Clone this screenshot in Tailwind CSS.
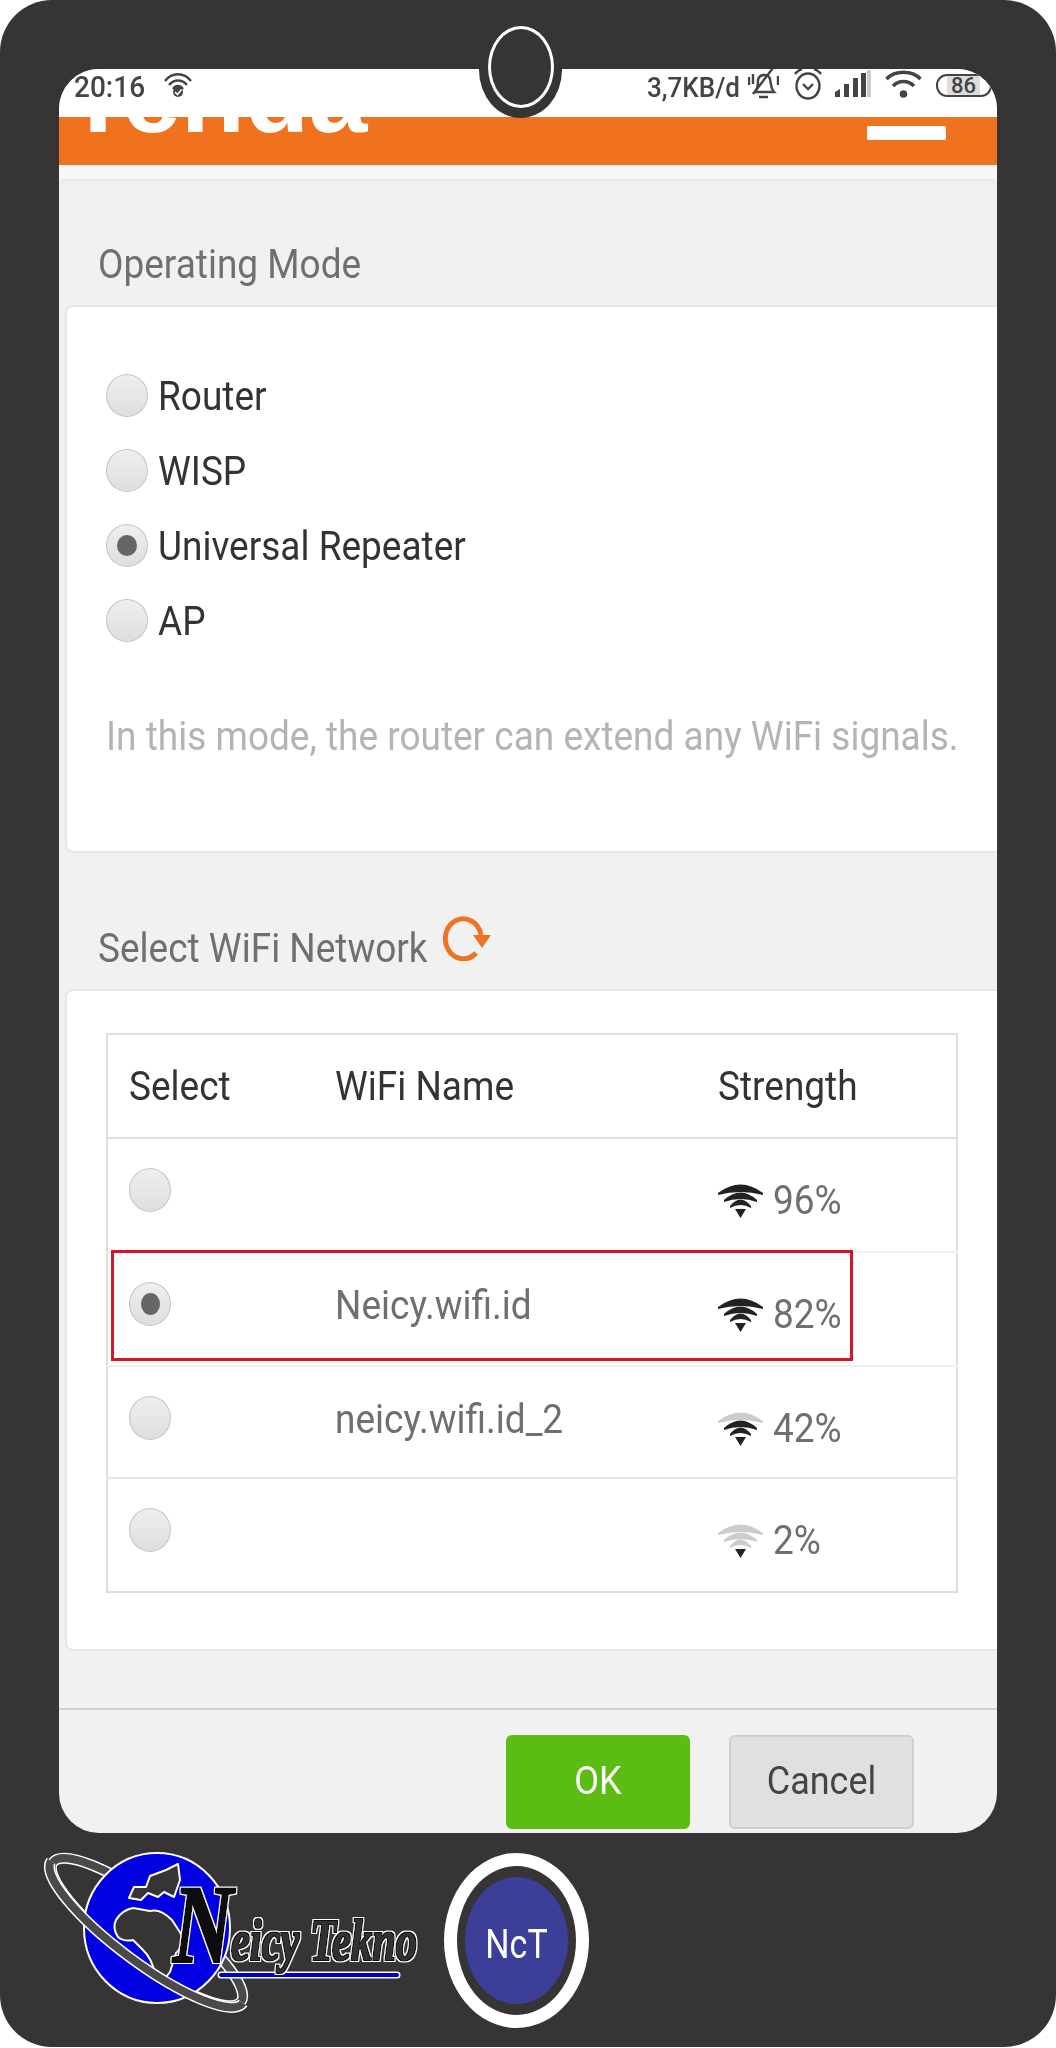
<!DOCTYPE html>
<html lang="en">
<head>
    <meta charset="UTF-8">
    <meta name="viewport" content="width=device-width, initial-scale=1.0">
    <title>Operating Mode</title>
    <script src="https://cdn.jsdelivr.net/npm/@tailwindcss/browser@4"></script>
</head>
<body class="bg-white font-['Roboto',sans-serif]">
    <!-- Phone frame -->
    <div class="relative w-[1056px] h-[2047px] bg-[#363435] rounded-[52px] pt-[69px] pl-[59px] overflow-hidden">
        <!-- Notch -->
        <div class="absolute left-[479px] top-[22px] w-[83px] h-[96px] rounded-[50%] bg-[#363435] flex items-center justify-center z-10">
            <div class="w-[66px] h-[82px] rounded-[50%] border-[3px] border-white -mt-[6px]"></div>
        </div>

        <!-- Screen -->
        <div class="w-[938px] h-[1764px] rounded-[40px] overflow-hidden bg-[#f1f1f1] flex flex-col">
            <!-- Status bar -->
            <div class="h-[48px] shrink-0 bg-white flex items-start text-[#444] font-medium relative">
                <span class="ml-[15px] mt-[1px] text-[28px] leading-[34px] inline-block scale-y-[1.08]">20:16</span>
                <svg class="ml-[18px] mt-[3px]" width="30" height="26" viewBox="0 0 28 26" fill="none" stroke="#444" stroke-width="2.400">
                    <path d="M1 9C8 0 20 0 27 9"/><path d="M5 13C10 7 18 7 23 13"/><path d="M9 17C12 13 16 13 19 17"/>
                    <circle cx="14" cy="20" r="5" fill="#444" stroke="none"/><path d="M11 20l2.500 2.500 4-5" stroke="#fff" stroke-width="1.600"/>
                </svg>
                <span class="absolute left-[588px] top-[1px] text-[26px] leading-[34px] inline-block scale-y-[1.08]">3,7KB/d</span>
                <!-- Muted bell -->
                <svg class="absolute left-[689px] top-[-2px]" width="31" height="32" viewBox="0 0 31 32" fill="none" stroke="#444" stroke-width="2.400">
                    <path d="M7 25c3-3 3-7 3-12 1-6 10-7 12-1 1 5 1 10 4 13z"/><path d="M11 30h9"/><path d="M5 27L25 1"/><path d="M1 10v8M5 7v10M30 9v9"/>
                </svg>
                <!-- Alarm clock -->
                <svg class="absolute left-[734px] top-[-1px]" width="30" height="32" viewBox="0 0 30 32" fill="none" stroke="#444" stroke-width="2.400">
                    <ellipse cx="15" cy="18" rx="11.500" ry="12.500"/><path d="M10 16l5 5 5-5"/><path d="M2 6c2-3 4-4 7-5M28 6c-2-3-4-4-7-5"/>
                </svg>
                <!-- Signal bars -->
                <svg class="absolute left-[776px] top-[1px]" width="36" height="28" viewBox="0 0 36 28">
                    <path d="M0 27v-5l5-3v8z" fill="#444"/><rect x="9" y="14" width="5" height="13" fill="#444"/><rect x="18" y="8" width="5" height="19" fill="#444"/>
                    <rect x="26" y="3" width="5" height="24" fill="#444"/><rect x="32" y="0" width="4" height="27" fill="#ccc"/>
                </svg>
                <!-- Wifi -->
                <svg class="absolute left-[826px] top-[1px]" width="37" height="28" viewBox="0 0 37 28" fill="none" stroke="#444" stroke-width="3.600">
                    <path d="M1.500 9C10 0 27 0 35.500 9"/><path d="M8 16C14 10 23 10 29 16"/><circle cx="18.500" cy="24" r="3.800" fill="#444" stroke="none"/>
                </svg>
                <!-- Battery -->
                <div class="absolute left-[877px] top-[5px] w-[56px] h-[23px] rounded-[11px] border-[2px] border-[#444] overflow-hidden flex items-center">
                    <div class="ml-[9px] w-[33px] h-full bg-[#ddd] flex items-center justify-center text-[22px] leading-none">86</div>
                </div>
            </div>

            <!-- Orange header -->
            <div class="relative h-[48px] shrink-0 bg-[#f0711e] overflow-hidden">
                <span class="absolute left-[7px] bottom-[17px] text-[105px] leading-none font-bold text-white font-['Liberation_Sans',sans-serif]">Tenda</span>
                <div class="absolute left-[808px] top-[9px] w-[79px] h-[14px] rounded-[2px] bg-white"></div>
            </div>
            <div class="h-[14px] shrink-0 bg-[#f7f7f7]"></div>

            <!-- Settings panel -->
            <div class="flex-1 flex flex-col border-t-2 border-[#e6e6e6] rounded-t-[8px]">
                <div class="h-[124px] shrink-0 pl-[39px] pt-[61px] text-[#6f6f6f]">
                    <h2 class="text-[37px] leading-[46px] font-normal inline-block scale-y-[1.08]">Operating Mode</h2>
                </div>

                <div class="ml-[6px] h-[548px] shrink-0 bg-white border-2 border-r-0 border-[#e6e6e6] rounded-l-[8px] pl-[39px] pt-[67px]">
                    <div class="h-[75px] flex items-start gap-[10px] text-[#333]">
                        <div class="w-[42px] h-[43px] rounded-[50%] border border-[#c4c4c4] bg-linear-to-b from-[#efefef] to-[#dedede]"></div>
                        <span class="mt-[2px] text-[37px] leading-[42px] inline-block scale-y-[1.08]">Router</span>
                    </div>
                    <div class="h-[75px] flex items-start gap-[10px] text-[#333]">
                        <div class="w-[42px] h-[43px] rounded-[50%] border border-[#c4c4c4] bg-linear-to-b from-[#efefef] to-[#dedede]"></div>
                        <span class="mt-[2px] text-[37px] leading-[42px] inline-block scale-y-[1.08]">WISP</span>
                    </div>
                    <div class="h-[75px] flex items-start gap-[10px] text-[#333]">
                        <div class="w-[42px] h-[43px] rounded-[50%] border border-[#c4c4c4] bg-linear-to-b from-[#efefef] to-[#dedede] flex items-center justify-center">
                            <div class="w-[20px] h-[21px] rounded-[50%] bg-[#666]"></div>
                        </div>
                        <span class="mt-[2px] text-[37px] leading-[42px] inline-block scale-y-[1.08]">Universal Repeater</span>
                    </div>
                    <div class="h-[75px] flex items-start gap-[10px] text-[#333]">
                        <div class="w-[42px] h-[43px] rounded-[50%] border border-[#c4c4c4] bg-linear-to-b from-[#efefef] to-[#dedede]"></div>
                        <span class="mt-[2px] text-[37px] leading-[42px] inline-block scale-y-[1.08]">AP</span>
                    </div>
                    <p class="mt-[40px] text-[37px] leading-[46px] text-[#b4b4b4] font-normal scale-y-[1.08] whitespace-nowrap">In this mode, the router can extend any WiFi signals.</p>
                </div>

                <div class="h-[136px] shrink-0 pl-[39px] pt-[73px] flex items-start text-[#6f6f6f]">
                    <h2 class="text-[37px] leading-[46px] font-normal inline-block scale-y-[1.08]">Select WiFi Network</h2>
                    <svg class="ml-[14px] -mt-[13px]" width="50" height="48" viewBox="0 0 50 48" fill="none">
                        <path d="M34 40A18 20 0 1 1 39 22" stroke="#ee7423" stroke-width="5"/>
                        <path d="M31 22H49L40 35z" fill="#ee7423"/>
                    </svg>
                </div>

                <div class="ml-[6px] h-[662px] shrink-0 bg-white border-2 border-r-0 border-[#e6e6e6] rounded-l-[8px] pl-[39px] pt-[42px] relative">
                    <table class="w-[852px] table-fixed border-2 border-[#dedede] border-collapse text-left">
                        <thead>
                            <tr class="h-[104px] border-b-2 border-[#dedede] text-[#333]">
                                <th class="w-[206px] pl-[21px] pt-[2px] font-normal text-[37px]"><span class="inline-block scale-y-[1.08]">Select</span></th>
                                <th class="w-[383px] pl-[22px] pt-[2px] font-normal text-[37px]"><span class="inline-block scale-y-[1.08]">WiFi Name</span></th>
                                <th class="pl-[22px] pt-[2px] font-normal text-[37px]"><span class="inline-block scale-y-[1.08]">Strength</span></th>
                            </tr>
                        </thead>
                        <tbody class="text-[#6f6f6f] text-[37px] font-normal">
                            <tr class="h-[114px] border-b-2 border-[#f0f0f0]">
                                <td class="align-top pl-[21px] pt-[29px]">
                                    <div class="w-[42px] h-[44px] rounded-[50%] border border-[#c4c4c4] bg-linear-to-b from-[#efefef] to-[#dedede]"></div>
                                </td>
                                <td></td>
                                <td class="align-top pl-[22px] pt-[42px]">
                                    <div class="flex items-center gap-[10px]">
                                        <svg width="45" height="34" viewBox="0 0 45 34">
                                            <path d="M0 9Q22.500-8 45 9V11Q22.500 5 0 11z" fill="#222"/><path d="M6 16Q22.500 1 39 16V18Q22.500 12 6 18z" fill="#222"/><path d="M12 22Q22.500 9 33 22V24Q22.500 18 12 24z" fill="#222"/><path d="M17 25H28L22.500 34z" fill="#222"/>
                                        </svg>
                                        <span class="inline-block leading-[40px] scale-y-[1.08]">96%</span>
                                    </div>
                                </td>
                            </tr>
                            <tr class="h-[114px] border-b-2 border-[#f0f0f0]">
                                <td class="align-top pl-[21px] pt-[29px]">
                                    <div class="w-[42px] h-[44px] rounded-[50%] border border-[#c4c4c4] bg-linear-to-b from-[#efefef] to-[#dedede] flex items-center justify-center">
                                        <div class="w-[19px] h-[22px] rounded-[50%] bg-[#666]"></div>
                                    </div>
                                </td>
                                <td class="align-top pl-[22px] pt-[25px]"><span class="inline-block leading-[46px] scale-y-[1.08]">Neicy.wifi.id</span></td>
                                <td class="align-top pl-[22px] pt-[42px]">
                                    <div class="flex items-center gap-[10px]">
                                        <svg width="45" height="34" viewBox="0 0 45 34">
                                            <path d="M0 9Q22.500-8 45 9V11Q22.500 5 0 11z" fill="#222"/><path d="M6 16Q22.500 1 39 16V18Q22.500 12 6 18z" fill="#222"/><path d="M12 22Q22.500 9 33 22V24Q22.500 18 12 24z" fill="#222"/><path d="M17 25H28L22.500 34z" fill="#222"/>
                                        </svg>
                                        <span class="inline-block leading-[40px] scale-y-[1.08]">82%</span>
                                    </div>
                                </td>
                            </tr>
                            <tr class="h-[112px] border-b-2 border-[#e6e6e6]">
                                <td class="align-top pl-[21px] pt-[29px]">
                                    <div class="w-[42px] h-[44px] rounded-[50%] border border-[#c4c4c4] bg-linear-to-b from-[#efefef] to-[#dedede]"></div>
                                </td>
                                <td class="align-top pl-[22px] pt-[25px]"><span class="inline-block leading-[46px] scale-y-[1.08]">neicy.wifi.id_2</span></td>
                                <td class="align-top pl-[22px] pt-[42px]">
                                    <div class="flex items-center gap-[10px]">
                                        <svg width="45" height="34" viewBox="0 0 45 34">
                                            <path d="M0 9Q22.500-8 45 9V11Q22.500 5 0 11z" fill="#ccc"/><path d="M6 16Q22.500 1 39 16V18Q22.500 12 6 18z" fill="#222"/><path d="M12 22Q22.500 9 33 22V24Q22.500 18 12 24z" fill="#222"/><path d="M17 25H28L22.500 34z" fill="#222"/>
                                        </svg>
                                        <span class="inline-block leading-[40px] scale-y-[1.08]">42%</span>
                                    </div>
                                </td>
                            </tr>
                            <tr class="h-[114px]">
                                <td class="align-top pl-[21px] pt-[29px]">
                                    <div class="w-[42px] h-[44px] rounded-[50%] border border-[#c4c4c4] bg-linear-to-b from-[#efefef] to-[#dedede]"></div>
                                </td>
                                <td></td>
                                <td class="align-top pl-[22px] pt-[42px]">
                                    <div class="flex items-center gap-[10px]">
                                        <svg width="45" height="34" viewBox="0 0 45 34">
                                            <path d="M0 9Q22.500-8 45 9V11Q22.500 5 0 11z" fill="#ccc"/><path d="M6 16Q22.500 1 39 16V18Q22.500 12 6 18z" fill="#ccc"/><path d="M12 22Q22.500 9 33 22V24Q22.500 18 12 24z" fill="#ccc"/><path d="M17 25H28L22.500 34z" fill="#222"/>
                                        </svg>
                                        <span class="inline-block leading-[40px] scale-y-[1.08]">2%</span>
                                    </div>
                                </td>
                            </tr>
                        </tbody>
                    </table>
                    <!-- Red highlight drawn over the second row -->
                    <div class="absolute left-[44px] top-[259px] w-[742px] h-[111px] border-[3px] border-[#d5162a]"></div>
                </div>

                <div class="flex-1"></div>

                <!-- Footer buttons -->
                <div class="h-[125px] shrink-0 border-t-2 border-[#d0d0d0] flex items-start pl-[447px] pt-[25px] gap-[39px]">
                    <button class="w-[184px] h-[94px] rounded-[6px] bg-[#5bbd14] text-white text-[36px] pb-[3px]"><span class="inline-block scale-y-[1.08]">OK</span></button>
                    <button class="w-[185px] h-[94px] rounded-[6px] bg-[#e0e0e0] border-2 border-[#cfcfcf] text-[#444] text-[36px] pb-[3px]"><span class="inline-block scale-y-[1.08]">Cancel</span></button>
                </div>
            </div>
        </div>

        <!-- Logos under the screen -->
        <div class="-ml-[19px] mt-[12px] flex items-start">
            <svg width="385" height="175" viewBox="40 1845 385 175" fill="none">
                <defs>
                    <filter id="heavy" x="-10%" y="-10%" width="120%" height="120%">
                        <feMorphology in="SourceAlpha" operator="dilate" radius="2.200" result="outer"/>
                        <feFlood flood-color="#fff"/><feComposite in2="outer" operator="in" result="edge"/>
                        <feMorphology in="SourceAlpha" operator="dilate" radius="1" result="inner"/>
                        <feFlood flood-color="#111"/><feComposite in2="inner" operator="in" result="body"/>
                        <feMerge><feMergeNode in="edge"/><feMergeNode in="body"/><feMergeNode in="SourceGraphic"/></feMerge>
                    </filter>
                </defs>
                <ellipse cx="147" cy="1932" rx="117" ry="30" transform="rotate(36.6 147 1932)" stroke="#fff" stroke-width="11"/>
                <ellipse cx="147" cy="1932" rx="117" ry="30" transform="rotate(36.6 147 1932)" stroke="#4a4a4a" stroke-width="8"/>
                <ellipse cx="157" cy="1928" rx="73" ry="75" fill="#0000e0" stroke="#fff" stroke-width="2"/>
                <path d="M116 1920Q122 1910 133 1908L150 1911Q160 1908 172 1920L183 1937Q182 1948 176 1953L170 1972L162 1982L156 1977Q152 1958 143 1950L133 1940Q124 1942 118 1937Q112 1928 116 1920Z" fill="#363435" stroke="#fff" stroke-width="2" stroke-linejoin="round"/>
                <path d="M129 1898L134 1887L146 1887L150 1876L166 1870L178 1864L180 1880L174 1897L164 1892L158 1897L148 1893L141 1900Z" fill="#363435" stroke="#fff" stroke-width="2" stroke-linejoin="round"/>
                <path d="M51 1861A117 30 36.600 0 0 243 2003" stroke="#fff" stroke-width="11"/>
                <path d="M51 1861A117 30 36.600 0 0 243 2003" stroke="#4a4a4a" stroke-width="8"/>
                <path d="M221 1975H397" stroke="#fff" stroke-width="7" stroke-linecap="round"/>
                <path d="M221 1975H397" stroke="#0000c8" stroke-width="4" stroke-linecap="round"/>
                <text x="173" y="1962" filter="url(#heavy)" font-family="Liberation Serif" font-weight="700" font-style="italic" font-size="112" fill="#111" textLength="60" lengthAdjust="spacingAndGlyphs">N</text>
                <text x="231" y="1960" filter="url(#heavy)" font-family="Liberation Serif" font-weight="700" font-style="italic" font-size="60" fill="#333" textLength="186" lengthAdjust="spacingAndGlyphs">eicy Tekno</text>
            </svg>
            <!-- NcT badge -->
            <div class="ml-[19px] mt-[8px] w-[145px] h-[175px] rounded-[50%] border-[13px] border-white flex items-center justify-center">
                <div class="w-[103px] h-[127px] rounded-[50%] bg-[#3c3f97] flex items-center justify-center pt-[8px] text-white text-[34px] font-['Roboto',sans-serif]">
                    <span class="inline-block scale-y-[1.2]">NcT</span>
                </div>
            </div>
        </div>
    </div>
</body>
</html>
